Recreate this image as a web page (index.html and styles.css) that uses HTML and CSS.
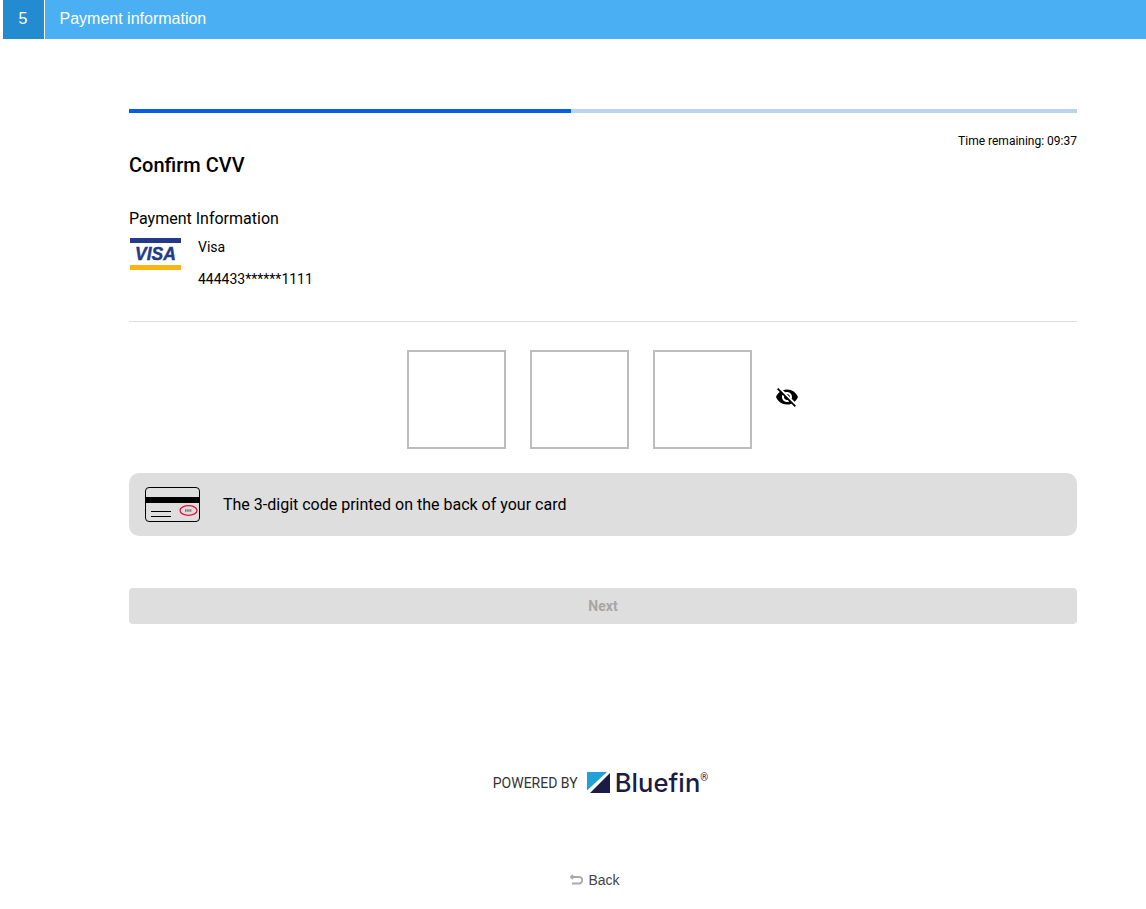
FILE: index.html
```html
<!DOCTYPE html>
<html lang="en">
<head>
<meta charset="utf-8">
<title>Payment information</title>
<link rel="stylesheet" href="styles.css">
</head>
<body>
<header class="step-header">
  <div class="step-number">5</div>
  <div class="step-title">Payment information</div>
</header>
<main class="content">
  <div class="progress"><div class="progress-fill"></div></div>
  <div class="timer">Time remaining: 09:37</div>
  <h1 class="title">Confirm CVV</h1>
  <h2 class="subtitle">Payment Information</h2>
  <div class="card-info">
    <div class="visa">
      <span class="visa-top"></span>
      <span class="visa-text">VISA</span>
      <span class="visa-bottom"></span>
    </div>
    <div class="card-lines">
      <div class="card-brand">Visa</div>
      <div class="card-number">444433******1111</div>
    </div>
  </div>
  <hr class="divider">
  <div class="cvv-row">
    <div class="cvv-box"></div>
    <div class="cvv-box"></div>
    <div class="cvv-box"></div>
    <svg class="eye" viewBox="0 0 24 24" width="24" height="24" aria-hidden="true"><path d="M12 7c2.76 0 5 2.24 5 5 0 .65-.13 1.26-.36 1.83l2.92 2.92c1.51-1.26 2.7-2.89 3.43-4.75-1.73-4.39-6-7.5-11-7.5-1.4 0-2.74.25-3.98.7l2.16 2.16C10.74 7.13 11.35 7 12 7zM2 4.27l2.28 2.28.46.46C3.08 8.3 1.78 10.02 1 12c1.73 4.39 6 7.5 11 7.5 1.55 0 3.03-.3 4.38-.84l.42.42L19.73 22 21 20.73 3.27 3 2 4.27zM7.53 9.8l1.55 1.55c-.05.21-.08.43-.08.65 0 1.66 1.34 3 3 3 .22 0 .44-.03.65-.08l1.55 1.55c-.67.33-1.41.53-2.2.53-2.76 0-5-2.24-5-5 0-.79.2-1.53.53-2.2zm4.31-.78l3.15 3.15.02-.16c0-1.66-1.34-3-3-3l-.17.01z"/></svg>
  </div>
  <div class="hint">
    <svg class="card-icon" viewBox="0 0 55 35" width="55" height="35" aria-hidden="true">
      <rect x=".5" y=".5" width="54" height="34" rx="3.500" fill="none" stroke="#000" stroke-width="1"/>
      <rect x="0" y="10" width="55" height="6" fill="#000"/>
      <path d="M6 24.500h20M6 29.500h20" stroke="#000" stroke-width="1" fill="none"/>
      <ellipse cx="43.500" cy="23.500" rx="8.500" ry="4.800" fill="#ddd" stroke="#ee1144" stroke-width="1.300"/>
      <path d="M40 23.500h7" stroke="#777" stroke-width="2.500" stroke-dasharray="1.500 .7"/>
    </svg>
    <span>The 3-digit code printed on the back of your card</span>
  </div>
  <button class="next" disabled>Next</button>
  <div class="powered">
    <span class="powered-label">POWERED BY</span>
    <svg class="bf-mark" viewBox="0 0 23 21" width="23" height="21" aria-hidden="true">
      <path d="M0 0h20L0 18.500z" fill="#22a0d8"/>
      <path d="M23 1v20H3z" fill="#1a1b47"/>
    </svg>
    <span class="bf-name">Bluefin</span><span class="bf-reg">®</span>
  </div>
  <a class="back" href="#">
    <svg viewBox="0 0 14 12" width="14" height="12" aria-hidden="true"><path d="M4 1 2 3l2 2M2 3h8a2.500 2.500 0 0 1 0 6.500H3" fill="none" stroke="#aaa" stroke-width="1.800"/></svg>
    <span>Back</span>
  </a>
</main>
</body>
</html>
```
FILE: styles.css
```css
* { box-sizing: border-box; }
html, body { margin: 0; padding: 0; background: #fff; }
body { font-family: Roboto, "Liberation Sans", sans-serif; color: #000; height: 909px; overflow: hidden; }

.step-header { display: flex; height: 39px; margin-left: 3px; background: #4ab0f3; font-family: "Liberation Sans", Arial, sans-serif; color: #fff; }
.step-number { width: 41px; padding-right: 1px; background: #238bd0; box-shadow: 1px 0 0 #fff; text-align: center; font-size: 16px; line-height: 37px; }
.step-title { flex: 1; margin-left: 1px; padding-left: 14.5px; font-size: 16px; line-height: 37px; }

.content { margin: 70px 69px 0 129px; }
.progress { height: 4px; background: #b8d4f0; }
.progress-fill { width: 442.4px; height: 100%; background: #005fe6; }
.timer { margin-top: 21px; text-align: right; font-size: 12px; line-height: 14px; }
.title { margin: 5px 0 0; font-size: 20px; font-weight: 500; line-height: 24px; }
.subtitle { margin: 32px 0 0; font-size: 16px; font-weight: 400; line-height: 19px; }

.card-info { display: flex; margin-top: 10px; gap: 17px; }
.visa { width: 51px; height: 32px; margin-left: 1px; display: flex; flex-direction: column; align-items: center; justify-content: space-between; }
.visa-top { align-self: stretch; height: 4.500px; background: #233a87; }
.visa-bottom { align-self: stretch; height: 5px; background: #fdb515; }
.visa-text { font-family: "Liberation Sans", Arial, sans-serif; font-style: italic; font-weight: 700; font-size: 17.5px; line-height: 16px; color: #233a87; -webkit-text-stroke: .4px #233a87; }
.card-lines { font-size: 14px; line-height: 16px; }
.card-brand { margin-top: 1px; }
.card-number { margin-top: 16px; }

.divider { margin: 34px 0 0; border: 0; height: 1px; background: #dedede; }

.cvv-row { display: flex; align-items: center; margin-top: 28px; padding-left: 278px; }
.cvv-box { width: 99px; height: 99px; border: 2px solid #bdbdbd; margin-right: 24px; }
.eye { margin-left: -1px; margin-top: -5px; display: block; }

.hint { display: flex; align-items: center; gap: 23px; height: 63px; margin-top: 24px; padding-left: 16px; background: #dedede; border-radius: 10px; font-size: 16px; }
.card-icon { display: block; }

.next { display: block; width: 100%; height: 36px; margin-top: 52px; border: 0; border-radius: 4px; background: #dedede; color: #a6a6a6; font: 700 14px Roboto, sans-serif; }

.powered { display: flex; align-items: center; justify-content: center; margin-top: 147px; height: 24px; padding-right: 5px; }
.powered-label { font-size: 14px; color: #333; margin-right: 9px; }
.bf-mark { display: block; margin-top: -1px; }
.bf-name { font-family: Inter, sans-serif; font-weight: 500; font-size: 25.5px; line-height: 24px; color: #1a1b47; margin-left: 5px; letter-spacing: .1px; }
.bf-reg { font-size: 10px; line-height: 12px; color: #1a1b47; align-self: flex-start; margin-top: 1px; }

.back { display: flex; align-items: center; justify-content: center; gap: 5px; margin-top: 77px; font: 14px/16px "Liberation Sans", Arial, sans-serif; color: #444; text-decoration: none; padding-right: 17px; }
```
